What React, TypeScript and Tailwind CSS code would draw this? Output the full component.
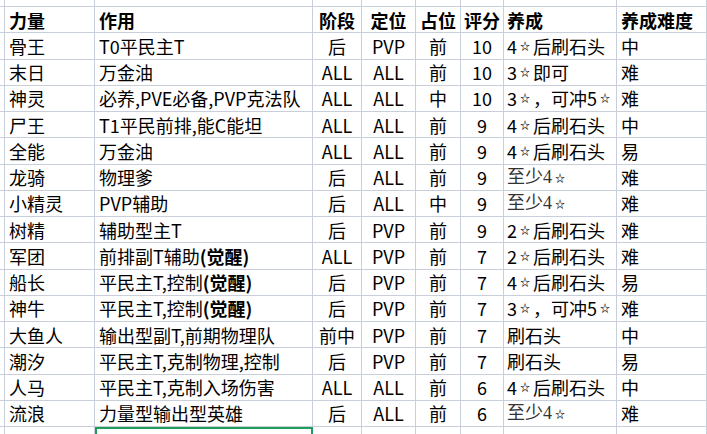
type Row = {
  name: string
  role: React.ReactNode
  stage: string
  pos: string
  slot: string
  score: string
  grow: React.ReactNode
  diff: string
}

const Star = () => (
  <span className="mx-[3px] align-[1px] text-[10px] font-bold text-black [font-family:'Noto_Sans_CJK_SC',sans-serif]">☆</span>
)

const Awake = () => <b className="font-bold">(觉醒)</b>

const Serif = ({ children }: { children: React.ReactNode }) => (
  <span className="text-[#333] [font-family:'Liberation_Serif','Noto_Sans_CJK_SC',serif]">{children}</span>
)

const rows: Row[] = [
  { name: '骨王', role: 'T0平民主T', stage: '后', pos: 'PVP', slot: '前', score: '10', grow: <>4<Star />后刷石头</>, diff: '中' },
  { name: '末日', role: '万金油', stage: 'ALL', pos: 'ALL', slot: '前', score: '10', grow: <>3<Star />即可</>, diff: '难' },
  { name: '神灵', role: '必养,PVE必备,PVP克法队', stage: 'ALL', pos: 'ALL', slot: '中', score: '10', grow: <>3<Star />，可冲5<Star /></>, diff: '难' },
  { name: '尸王', role: 'T1平民前排,能C能坦', stage: 'ALL', pos: 'ALL', slot: '前', score: '9', grow: <>4<Star />后刷石头</>, diff: '中' },
  { name: '全能', role: '万金油', stage: 'ALL', pos: 'ALL', slot: '前', score: '9', grow: <>4<Star />后刷石头</>, diff: '易' },
  { name: '龙骑', role: '物理爹', stage: '后', pos: 'ALL', slot: '前', score: '9', grow: <Serif>至少4<Star /></Serif>, diff: '难' },
  { name: '小精灵', role: 'PVP辅助', stage: '后', pos: 'ALL', slot: '中', score: '9', grow: <Serif>至少4<Star /></Serif>, diff: '难' },
  { name: '树精', role: '辅助型主T', stage: '后', pos: 'PVP', slot: '前', score: '9', grow: <>2<Star />后刷石头</>, diff: '难' },
  { name: '军团', role: <>前排副T辅助<Awake /></>, stage: 'ALL', pos: 'PVP', slot: '前', score: '7', grow: <>2<Star />后刷石头</>, diff: '难' },
  { name: '船长', role: <>平民主T,控制<Awake /></>, stage: '后', pos: 'PVP', slot: '前', score: '7', grow: <>4<Star />后刷石头</>, diff: '易' },
  { name: '神牛', role: <>平民主T,控制<Awake /></>, stage: '后', pos: 'PVP', slot: '前', score: '7', grow: <>3<Star />，可冲5<Star /></>, diff: '难' },
  { name: '大鱼人', role: '输出型副T,前期物理队', stage: '前中', pos: 'PVP', slot: '前', score: '7', grow: '刷石头', diff: '中' },
  { name: '潮汐', role: '平民主T,克制物理,控制', stage: '后', pos: 'PVP', slot: '前', score: '7', grow: '刷石头', diff: '易' },
  { name: '人马', role: '平民主T,克制入场伤害', stage: 'ALL', pos: 'ALL', slot: '前', score: '6', grow: <>4<Star />后刷石头</>, diff: '中' },
  { name: '流浪', role: '力量型输出型英雄', stage: '后', pos: 'ALL', slot: '前', score: '6', grow: <Serif>至少4<Star /></Serif>, diff: '难' },
]

const cols = 'grid grid-cols-[5px_90px_218px_49px_54px_45px_43px_113px_90px]'
const cell = 'flex items-center overflow-visible whitespace-nowrap border-r border-b border-[#c9cfda]'

function Line({ r, head }: { r: Row; head?: boolean }) {
  const h = head ? 'font-bold' : ''
  return (
    <div className={`${cols} h-[26.25px] ${h}`}>
      <div className={cell} />
      <div className={`${cell} pl-[4px]`}>{r.name}</div>
      <div className={`${cell} pl-[4px]`}>{r.role}</div>
      <div className={`${cell} justify-center`}>{r.stage}</div>
      <div className={`${cell} justify-center`}>{r.pos}</div>
      <div className={`${cell} justify-center`}>{r.slot}</div>
      <div className={`${cell} justify-center`}>{r.score}</div>
      <div className={`${cell} pl-[3px]`}>{r.grow}</div>
      <div className={`${cell} pl-[4px]`}>{r.diff}</div>
    </div>
  )
}

export default function App() {
  const head: Row = { name: '力量', role: '作用', stage: '阶段', pos: '定位', slot: '占位', score: '评分', grow: '养成', diff: '养成难度' }
  return (
    <div className="h-[434px] w-[707px] overflow-hidden bg-white text-[18px] leading-none text-black [font-family:'Noto_Sans_CJK_SC',sans-serif]">
      <div className={`${cols} h-[7px]`}>
        {Array.from({ length: 9 }).map((_, i) => (
          <div key={i} className="border-r border-b border-[#c9cfda]" />
        ))}
      </div>
      <Line r={head} head />
      {rows.map((r) => (
        <Line key={r.name} r={r} />
      ))}
      <div className={`${cols} h-[12px]`}>
        {Array.from({ length: 9 }).map((_, i) => (
          <div
            key={i}
            className={i === 2 ? 'border-2 border-[#1e9e5e]' : 'border-r border-[#c9cfda]'}
          />
        ))}
      </div>
    </div>
  )
}
